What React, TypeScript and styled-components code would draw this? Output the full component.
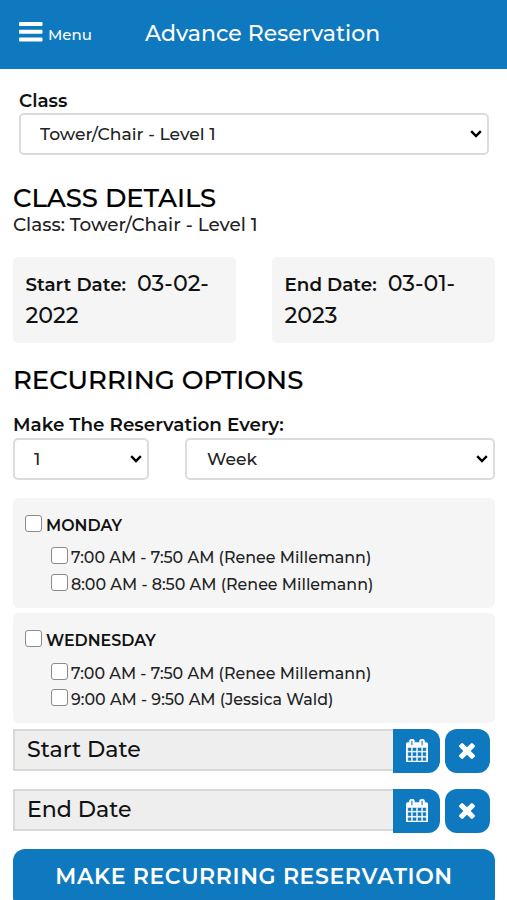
import React from 'react';
import styled, { createGlobalStyle } from 'styled-components';

const BLUE = '#0f79bf';

const GlobalStyle = createGlobalStyle`
  * { box-sizing: border-box; }
  html, body { margin: 0; padding: 0; background: #fff; }
  body {
    font-family: Montserrat, Inter, "Open Sans", sans-serif;
    font-weight: 500;
    color: #111;
    overflow: hidden;
  }
`;

const Screen = styled.div`
  width: 100%;
  height: 900px;
  overflow: hidden;
  background: #fff;
`;

const Header = styled.header`
  display: grid;
  grid-template-columns: 145px 1fr;
  height: 69px;
  background: ${BLUE};
  color: #fff;
`;

const MenuButton = styled.button`
  display: flex;
  align-items: flex-start;
  gap: 5px;
  padding: 22px 0 0 19px;
  border: 0;
  background: none;
  color: inherit;
  font-family: inherit;
  font-weight: 500;
`;

const MenuLabel = styled.span`
  padding-top: 3px;
  font-size: 15px;
  line-height: 20px;
`;

const Title = styled.h1`
  margin: 0;
  padding-top: 19px;
  font-size: 22px;
  font-weight: 500;
  line-height: 30px;
  white-space: nowrap;
`;

const Content = styled.main`
  display: flex;
  flex-direction: column;
  padding: 21px 12px 0 13px;
`;

const ClassField = styled.div`
  display: flex;
  flex-direction: column;
  gap: 1px;
  padding: 0 6px;
`;

const Label = styled.label`
  font-size: 18.35px;
  font-weight: 600;
  line-height: 22px;
  white-space: nowrap;
`;

const SelectFrame = styled.div`
  display: grid;
  grid-template-columns: 1fr 17px;
  align-items: center;
  height: 42px;
  border: 2px solid #dcdcdc;
  border-radius: 5px;
  background: #fff;

  & > svg {
    grid-area: 1 / 2;
    pointer-events: none;
  }
`;

const Select = styled.select<{ $indent?: number }>`
  grid-area: 1 / 1 / 2 / 3;
  width: 100%;
  height: 38px;
  padding: 0 20px 2px ${(p) => p.$indent ?? 19}px;
  border: 0;
  background: transparent;
  appearance: none;
  color: #222;
  font-family: inherit;
  font-size: 17.2px;
  font-weight: 500;
`;

const Heading = styled.h2<{ $top: number }>`
  margin: ${(p) => p.$top}px 0 0;
  font-size: 25.9px;
  font-weight: 500;
  line-height: 30px;
  color: #000;
  -webkit-text-stroke: 0.2px #000;
  white-space: nowrap;
`;

const Summary = styled.p`
  margin: 0 0 21px;
  padding-top: 1px;
  font-size: 18.4px;
  line-height: 22px;
  color: #222;
`;

const DateCards = styled.div`
  display: grid;
  grid-template-columns: 1fr 1fr;
  gap: 36px;
`;

const DateCard = styled.div`
  height: 86px;
  padding: 11px 12px 0 12.5px;
  border-radius: 5px;
  background: #f5f5f5;
  font-size: 22.2px;
  line-height: 31px;
`;

const DateName = styled.span`
  margin-right: 11px;
  font-size: 18.35px;
  font-weight: 600;
`;

const Year = styled.span`
  display: block;
`;

const FrequencyLabel = styled(Label)`
  margin-top: 19px;
  padding-bottom: 2px;
`;

const Frequency = styled.div`
  display: grid;
  grid-template-columns: 136px 1fr;
  gap: 36px;
  margin-bottom: 18px;
`;

const Days = styled.div`
  display: flex;
  flex-direction: column;
  gap: 5px;
  margin-bottom: 6px;
`;

const DayPanel = styled.section`
  height: 110px;
  padding: 17px 12px 0;
  border-radius: 6px;
  background: #f5f5f5;
`;

const CheckRow = styled.label<{ $gap: number; $height: number }>`
  display: flex;
  align-items: flex-start;
  gap: ${(p) => p.$gap}px;
  height: ${(p) => p.$height}px;
`;

const Checkbox = styled.input.attrs({ type: 'checkbox' })`
  flex: none;
  width: 17px;
  height: 17px;
  margin: 0;
  border: 1.5px solid #8b8b8b;
  border-radius: 3px;
  background: #fff;
  appearance: none;

  &:checked { background: ${BLUE}; }
`;

const DayName = styled.span`
  padding-top: 1px;
  font-size: 15.9px;
  font-weight: 600;
  line-height: 20px;
`;

const Slots = styled.div<{ $top: number }>`
  padding: ${(p) => p.$top}px 0 0 26px;
`;

const SlotText = styled.span`
  padding-top: 1px;
  font-size: 15.9px;
  line-height: 20px;
  color: #222;
  white-space: nowrap;
`;

const DateRow = styled.div`
  display: grid;
  grid-template-columns: 380px 47px 45px;
  align-items: start;
  height: 44px;
  margin-bottom: 16px;

  & > :last-child { margin-left: 5px; }
`;

const DateInput = styled.input`
  width: 100%;
  height: 42px;
  padding: 0 0 1px 12px;
  border: 2px solid #d8d8d8;
  border-right: 0;
  border-radius: 0;
  background: #eee;
  font-family: inherit;
  font-size: 22.1px;
  font-weight: 500;
  color: #111;

  &::placeholder { color: #111; opacity: 1; }
`;

const IconButton = styled.button<{ $joined?: boolean }>`
  display: flex;
  align-items: center;
  justify-content: center;
  width: ${(p) => (p.$joined ? 47 : 45)}px;
  height: 44px;
  padding: 0 1px ${(p) => (p.$joined ? 1 : 0)}px 0;
  border: 0;
  border-radius: ${(p) => (p.$joined ? '0 12px 12px 0' : '12px')};
  background: ${BLUE};
  color: #fff;

  & > svg { margin-left: ${(p) => (p.$joined ? 2 : 0)}px; }
`;

const SubmitButton = styled.button`
  height: 60px;
  padding: 0 0 5px;
  border: 0;
  border-radius: 12px;
  background: ${BLUE};
  color: #fff;
  font-family: inherit;
  font-size: 22px;
  font-weight: 600;
  letter-spacing: 0.62px;
  white-space: nowrap;
`;

const MenuIcon = () => (
  <svg width="24" height="20" viewBox="0 0 24 20" fill="#fff">
    <rect x="0" y="0" width="23.5" height="4" rx="1" />
    <rect x="0" y="7.8" width="23.5" height="4" rx="1" />
    <rect x="0" y="15.6" width="23.5" height="4" rx="1" />
  </svg>
);

const Chevron = () => (
  <svg width="12" height="8" viewBox="0 0 12 8" fill="none" stroke="#000" strokeWidth="2.4">
    <path d="M1.2 1.2 6 6 10.8 1.2" />
  </svg>
);

const CalendarIcon = () => (
  <svg width="22" height="23.7" viewBox="0 0 1664 1792" fill="currentColor">
    <path
      stroke="currentColor"
      strokeWidth="40"
      d="M128 1664h288v-288h-288v288zM480 1664h320v-288h-320v288zM128 1312h288v-320h-288v320zM480 1312h320v-320h-320v320zM128 928h288v-288h-288v288zM864 1664h320v-288h-320v288zM480 928h320v-288h-320v288zM1248 1664h288v-288h-288v288zM864 1312h320v-320h-320v320zM512 448v-288q0-13-9.5-22.5t-22.5-9.5h-64q-13 0-22.5 9.5t-9.5 22.5v288q0 13 9.5 22.5t22.5 9.5h64q13 0 22.5-9.5t9.5-22.5zM1248 1312h288v-320h-288v320zM864 928h320v-288h-320v288zM1248 928h288v-288h-288v288zM1280 448v-288q0-13-9.5-22.5t-22.5-9.5h-64q-13 0-22.5 9.5t-9.5 22.5v288q0 13 9.5 22.5t22.5 9.5h64q13 0 22.5-9.5t9.5-22.5zM1664 384v1280q0 52-38 90t-90 38h-1408q-52 0-90-38t-38-90v-1280q0-52 38-90t90-38h128v-96q0-66 47-113t113-47h64q66 0 113 47t47 113v96h384v-96q0-66 47-113t113-47h64q66 0 113 47t47 113v96h128q52 0 90 38t38 90z"
    />
  </svg>
);

const ClearIcon = () => (
  <svg width="16" height="16" viewBox="110 366 1188 1188" fill="currentColor">
    <path d="M1298 1322q0 40-28 68l-136 136q-28 28-68 28t-68-28l-294-294-294 294q-28 28-68 28t-68-28l-136-136q-28-28-28-68t28-68l294-294-294-294q-28-28-28-68t28-68l136-136q28-28 68-28t68 28l294 294 294-294q28-28 68-28t68 28l136 136q28 28 28 68t-28 68l-294 294 294 294q28 28 28 68z" />
  </svg>
);

const days = [
  {
    name: 'MONDAY',
    top: 12,
    rowHeight: 26.5,
    slots: ['7:00 AM - 7:50 AM (Renee Millemann)', '8:00 AM - 8:50 AM (Renee Millemann)'],
  },
  {
    name: 'WEDNESDAY',
    top: 13,
    rowHeight: 26,
    slots: ['7:00 AM - 7:50 AM (Renee Millemann)', '9:00 AM - 9:50 AM (Jessica Wald)'],
  },
];

const cards = [
  { name: 'Start Date:', monthDay: '03-02-', year: '2022' },
  { name: 'End Date:', monthDay: '03-01-', year: '2023' },
];

const dateFields = ['Start Date', 'End Date'];

export default function App() {
  return (
    <>
      <GlobalStyle />
      <Screen>
        <Header>
          <MenuButton>
            <MenuIcon />
            <MenuLabel>Menu</MenuLabel>
          </MenuButton>
          <Title>Advance Reservation</Title>
        </Header>
        <Content>
          <ClassField>
            <Label>Class</Label>
            <SelectFrame>
              <Select defaultValue="tower" aria-label="Class">
                <option value="tower">Tower/Chair - Level 1</option>
              </Select>
              <Chevron />
            </SelectFrame>
          </ClassField>

          <Heading $top={28}>CLASS DETAILS</Heading>
          <Summary>Class: Tower/Chair - Level 1</Summary>
          <DateCards>
            {cards.map((card) => (
              <DateCard key={card.name}>
                <DateName>{card.name}</DateName>
                {card.monthDay}
                <Year>{card.year}</Year>
              </DateCard>
            ))}
          </DateCards>

          <Heading $top={22}>RECURRING OPTIONS</Heading>
          <FrequencyLabel>Make The Reservation Every:</FrequencyLabel>
          <Frequency>
            <SelectFrame>
              <Select defaultValue="1" aria-label="Interval">
                <option value="1">1</option>
              </Select>
              <Chevron />
            </SelectFrame>
            <SelectFrame>
              <Select $indent={20} defaultValue="week" aria-label="Unit">
                <option value="week">Week</option>
              </Select>
              <Chevron />
            </SelectFrame>
          </Frequency>

          <Days>
            {days.map((day) => (
              <DayPanel key={day.name}>
                <CheckRow $gap={4} $height={20}>
                  <Checkbox />
                  <DayName>{day.name}</DayName>
                </CheckRow>
                <Slots $top={day.top}>
                  {day.slots.map((slot) => (
                    <CheckRow key={slot} $gap={3} $height={day.rowHeight}>
                      <Checkbox />
                      <SlotText>{slot}</SlotText>
                    </CheckRow>
                  ))}
                </Slots>
              </DayPanel>
            ))}
          </Days>

          {dateFields.map((field) => (
            <DateRow key={field}>
              <DateInput placeholder={field} readOnly />
              <IconButton $joined aria-label={`Pick ${field}`}>
                <CalendarIcon />
              </IconButton>
              <IconButton aria-label={`Clear ${field}`}>
                <ClearIcon />
              </IconButton>
            </DateRow>
          ))}
          <SubmitButton>MAKE RECURRING RESERVATION</SubmitButton>
        </Content>
      </Screen>
    </>
  );
}
